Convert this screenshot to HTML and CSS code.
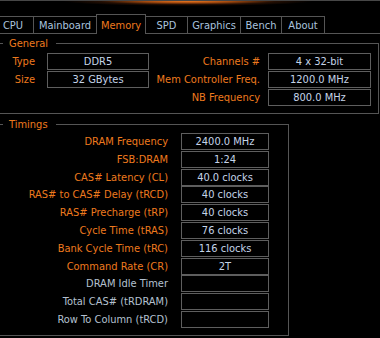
FILE: index.html
```html
<!DOCTYPE html>
<html>
<head>
<meta charset="utf-8">
<link rel="stylesheet" href="styles.css">
</head>
<body>
<div class="glow"></div>
<nav class="tabs">
  <div class="tab t-cpu">CPU</div>
  <div class="tab t-mb">Mainboard</div>
  <div class="tab active">Memory</div>
  <div class="tab t-spd">SPD</div>
  <div class="tab t-gfx">Graphics</div>
  <div class="tab t-bench">Bench</div>
  <div class="tab t-about">About</div>
</nav>
<section class="group general">
  <div class="legend">General</div>
  <div class="gen-grid">
    <span class="lbl l1">Type</span><span class="val">DDR5</span><span class="lbl l2">Channels #</span><span class="val">4 x 32-bit</span>
    <span class="lbl l1">Size</span><span class="val">32 GBytes</span><span class="lbl l2">Mem Controller Freq.</span><span class="val">1200.0 MHz</span>
    <span></span><span></span><span class="lbl l2">NB Frequency</span><span class="val">800.0 MHz</span>
  </div>
</section>
<section class="group timings">
  <div class="legend">Timings</div>
  <div class="tim-grid">
    <span class="lbl">DRAM Frequency</span><span class="val">2400.0 MHz</span>
    <span class="lbl">FSB:DRAM</span><span class="val">1:24</span>
    <span class="lbl">CAS# Latency (CL)</span><span class="val">40.0 clocks</span>
    <span class="lbl">RAS# to CAS# Delay (tRCD)</span><span class="val">40 clocks</span>
    <span class="lbl">RAS# Precharge (tRP)</span><span class="val">40 clocks</span>
    <span class="lbl">Cycle Time (tRAS)</span><span class="val">76 clocks</span>
    <span class="lbl">Bank Cycle Time (tRC)</span><span class="val">116 clocks</span>
    <span class="lbl">Command Rate (CR)</span><span class="val">2T</span>
    <span class="lbl dim">DRAM Idle Timer</span><span class="val"></span>
    <span class="lbl dim">Total CAS# (tRDRAM)</span><span class="val"></span>
    <span class="lbl dim">Row To Column (tRCD)</span><span class="val"></span>
  </div>
</section>
</body>
</html>
```

FILE: styles.css
```css
* { box-sizing: border-box; margin: 0; padding: 0; }
html, body { background: #000; }
body {
  width: 380px;
  height: 338px;
  overflow: hidden;
  font-family: "DejaVu Sans Condensed", "DejaVu Sans", sans-serif;
  font-size: 11px;
  color: #c4d4e8;
}

.glow {
  height: 6px;
  border-top: 1px solid #474747;
  background: radial-gradient(ellipse 125px 5px at 188px 0px, #f07a22 0%, rgba(220,100,20,0.75) 35%, rgba(120,50,10,0.3) 70%, rgba(0,0,0,0) 100%);
}

.tabs {
  display: flex;
  align-items: flex-end;
  height: 28px;
  margin-left: -8px;
  border-bottom: 1px solid #555;
}
.tab {
  height: 17px;
  padding-top: 1px;
  line-height: 16px;
  text-align: center;
  border-top: 1px solid #555;
  border-left: 1px solid #555;
  color: #a9c3df;
  background: #000;
}
.t-cpu { width: 41px; }
.t-mb { width: 63px; }
.tab.active {
  width: 50px;
  height: 20px;
  padding-top: 1px;
  line-height: 19px;
  margin-bottom: -1px;
  border-right: 1px solid #555;
  color: #ee7a1e;
}
.t-spd { width: 41px; border-left: none; }
.t-gfx { width: 53px; }
.t-bench { width: 41px; }
.t-about { width: 44px; border-right: 1px solid #555; }

.group {
  position: relative;
  margin-left: -1px;
  border: 1px solid #555;
}
.legend {
  position: absolute;
  top: -7px;
  left: 3px;
  padding: 0 8px 0 6px;
  line-height: 13px;
  background: #000;
  color: #ee7a1e;
}

.general {
  width: 380px;
  height: 71px;
  margin-top: 9px;
  padding-top: 9px;
}
.gen-grid {
  display: grid;
  grid-template-columns: 47px 102px 119px 103px;
  grid-auto-rows: 17px;
  row-gap: 1px;
}

.timings {
  width: 290px;
  height: 212px;
  margin-top: 10px;
  padding-top: 8px;
}
.tim-grid {
  display: grid;
  grid-template-columns: 181px 88px;
  grid-auto-rows: 17px;
  row-gap: 0.8px;
}

.lbl {
  text-align: right;
  line-height: 17px;
  color: #ee7a1e;
  white-space: nowrap;
}
.l1 { padding-right: 12px; }
.l2 { padding-right: 8px; }
.tim-grid .lbl { padding-right: 13px; }
.lbl.dim { color: #b4c0d0; }

.val {
  border: 1px solid #5e5e5e;
  text-align: center;
  line-height: 15px;
  color: #c4d4e8;
  white-space: nowrap;
}
```
